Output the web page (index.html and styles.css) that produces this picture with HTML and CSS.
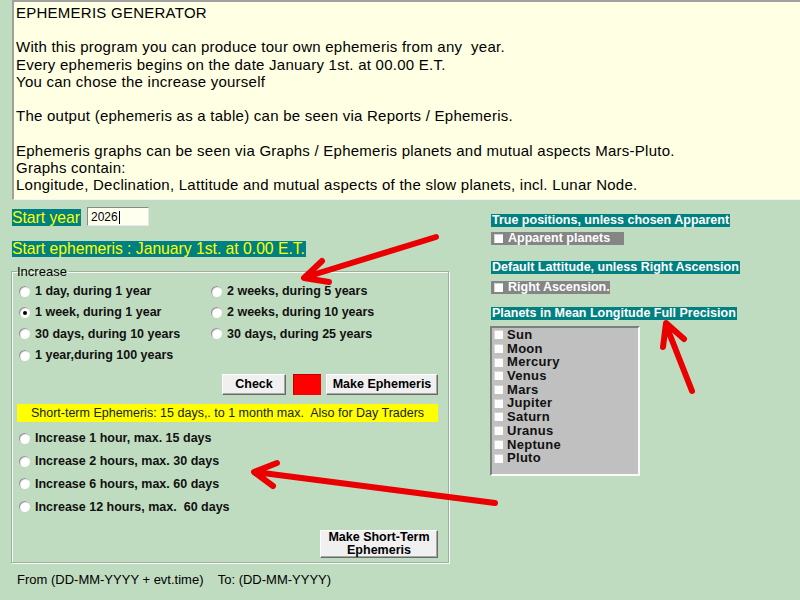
FILE: index.html
```html
<!DOCTYPE html>
<html lang="en">

<head>
  <meta charset="UTF-8">
  <meta name="viewport" content="width=device-width, initial-scale=1.0">
  <title>Ephemeris Generator</title>
  <link rel="stylesheet" href="styles.css">
</head>

<body>
  <div class="intro">
    <p>EPHEMERIS GENERATOR</p>
    <p>With this program you can produce tour own ephemeris from any&nbsp; year.<br>
      Every ephemeris begins on the date January 1st. at 00.00 E.T.<br>
      You can chose the increase yourself</p>
    <p>The output (ephemeris as a table) can be seen via Reports / Ephemeris.</p>
    <p>Ephemeris graphs can be seen via Graphs / Ephemeris planets and mutual aspects Mars-Pluto.<br>
      Graphs contain:<br>
      Longitude, Declination, Lattitude and mutual aspects of the slow planets, incl. Lunar Node.</p>
  </div>

  <div class="main">
    <div class="left">
      <div class="year-row">
        <span class="tag">Start year</span>
        <div class="field">2026<span class="caret"></span></div>
      </div>
      <div class="tag start">Start ephemeris : January 1st. at 0.00 E.T.</div>

      <fieldset class="increase">
        <legend>Increase</legend>
        <div class="options">
          <label class="opt"><span class="radio"></span>1 day, during 1 year</label>
          <label class="opt"><span class="radio"></span>2 weeks, during 5 years</label>
          <label class="opt"><span class="radio checked"></span>1 week, during 1 year</label>
          <label class="opt"><span class="radio"></span>2 weeks, during 10 years</label>
          <label class="opt"><span class="radio"></span>30 days, during 10 years</label>
          <label class="opt"><span class="radio"></span>30 days, during 25 years</label>
          <label class="opt"><span class="radio"></span>1 year,during 100 years</label>
        </div>

        <div class="actions">
          <button class="btn check">Check</button>
          <span class="swatch"></span>
          <button class="btn make">Make Ephemeris</button>
        </div>

        <div class="note">Short-term Ephemeris: 15 days,. to 1 month max.&nbsp; Also for Day Traders</div>

        <div class="short">
          <label class="opt"><span class="radio"></span>Increase 1 hour, max. 15 days</label>
          <label class="opt"><span class="radio"></span>Increase 2 hours, max. 30 days</label>
          <label class="opt"><span class="radio"></span>Increase 6 hours, max. 60 days</label>
          <label class="opt"><span class="radio"></span>Increase 12 hours, max.&nbsp; 60 days</label>
        </div>

        <div class="actions">
          <button class="btn tall">Make Short-Term<br>Ephemeris</button>
        </div>
      </fieldset>

      <p class="range">From (DD-MM-YYYY + evt.time)    To: (DD-MM-YYYY)</p>
    </div>

    <div class="right">
      <div class="head">True positions, unless chosen Apparent</div>
      <label class="toggle apparent"><span class="box"></span>Apparent planets</label>

      <div class="head gap">Default Lattitude, unless Right Ascension</div>
      <label class="toggle ascension"><span class="box"></span>Right Ascension.</label>

      <div class="head gap-small">Planets in Mean Longitude Full Precision</div>
      <ul class="planets">
        <li><span class="box"></span>Sun</li>
        <li><span class="box"></span>Moon</li>
        <li><span class="box"></span>Mercury</li>
        <li><span class="box"></span>Venus</li>
        <li><span class="box"></span>Mars</li>
        <li><span class="box"></span>Jupiter</li>
        <li><span class="box"></span>Saturn</li>
        <li><span class="box"></span>Uranus</li>
        <li><span class="box"></span>Neptune</li>
        <li><span class="box"></span>Pluto</li>
      </ul>
    </div>
  </div>

  <!-- hand-drawn pointers over the form -->
  <svg class="arrows" width="800" height="600" viewBox="0 0 800 600">
    <path d="M436 237 L306 277 M322 261 L304 278 L329 282" />
    <path d="M495 503 L255 472 M277 463 L254 472 L273 486" />
    <path d="M692 391 L666 325 M663 347 L666 323 L684 339" />
  </svg>
</body>

</html>
```

FILE: styles.css
```css
body {
  margin: 0;
  height: 600px;
  overflow: hidden;
  position: relative;
  background-color: #c0dcc0;
  font-family: "Liberation Sans", Arial, sans-serif;
  color: #000;
}

/* info panel at the top */
.intro {
  margin-left: 12px;
  height: 200px;
  box-sizing: border-box;
  padding: 2px 0 0 2px;
  background-color: #ffffe3;
  border-top: 2px solid #a0a0a0;
  border-left: 2px solid #a0a0a0;
  border-bottom: 1px solid #f4f4f4;
  font-size: 15px;
  line-height: 17.2px;
  letter-spacing: 0.25px;
}

.intro p {
  margin: 0 0 17.2px;
}

.main {
  display: flex;
  padding-left: 11px;
}

.left {
  width: 438px;
}

.tag {
  display: inline-block;
  background-color: #008080;
  color: #ffff00;
  font-size: 15.7px;
  line-height: 17px;
}

.year-row {
  display: flex;
  align-items: flex-start;
  margin: 7px 0 0 1px;
}

.year-row .tag {
  margin-top: 2px;
  padding-right: 1px;
}

.field {
  box-sizing: border-box;
  width: 62px;
  height: 19px;
  margin-left: 6px;
  padding: 3px 0 0 3px;
  background-color: #fffff0;
  border: 1px solid #e8e8e8;
  border-top-color: #8a8a8a;
  border-left-color: #8a8a8a;
  font-size: 12px;
  line-height: 13px;
}

.caret {
  display: inline-block;
  width: 1px;
  height: 13px;
  margin-left: 1px;
  vertical-align: top;
  background-color: #000;
}

.start {
  display: block;
  width: fit-content;
  margin: 14.5px 0 0 1px;
  line-height: 16px;
  padding-right: 1px;
}

/* group box */
.increase {
  box-sizing: border-box;
  width: 438px;
  margin: 7px 0 0;
  padding: 0 10px 4px 7px;
  border: 1px solid #a2ada2;
  box-shadow: inset 1px 1px 0 #f6fbf6, 1px 1px 0 #f6fbf6;
}

.increase legend {
  margin-left: -2px;
  padding: 0 2px 0 0;
  font-size: 13px;
  line-height: 15px;
}

.options {
  display: grid;
  grid-template-columns: 192px 1fr;
  grid-auto-rows: 21.33px;
  margin-top: 2px;
}

.opt {
  display: flex;
  align-items: center;
  gap: 5px;
  font-size: 12.5px;
  font-weight: bold;
  color: #111;
}

.radio {
  position: relative;
  flex: none;
  width: 11px;
  height: 11px;
  border-radius: 50%;
  background-color: #fff;
  box-shadow: inset 1px 1px 1px #8c8c8c;
}

.radio.checked::after {
  content: "";
  position: absolute;
  left: 4px;
  top: 4px;
  width: 4px;
  height: 4px;
  border-radius: 50%;
  background-color: #000;
}

.actions {
  display: flex;
  justify-content: flex-end;
  align-items: center;
  margin-top: 8px;
}

.btn {
  box-sizing: border-box;
  height: 21px;
  padding: 0;
  background-color: #f0f0f0;
  border: 1px solid;
  border-color: #fff #6a6a6a #6a6a6a #fff;
  box-shadow: inset -1px -1px 0 #a8a8a8;
  font-family: inherit;
  font-size: 12.5px;
  font-weight: bold;
  color: #000;
}

.check {
  width: 64px;
}

.swatch {
  width: 28px;
  height: 21px;
  margin: 0 5px 0 7px;
  background-color: #ff0000;
  box-shadow: inset 1px 1px 0 #c00000;
}

.make {
  width: 112px;
}

.note {
  height: 18px;
  margin: 9px 0 0 -2px;
  background-color: #ffff00;
  color: #222;
  font-size: 12.5px;
  line-height: 18px;
  text-align: center;
}

.short {
  display: grid;
  grid-auto-rows: 22.8px;
  margin-top: 5px;
}

.short + .actions {
  margin-top: 12px;
}

.tall {
  width: 118px;
  height: 28px;
  line-height: 13px;
}

.range {
  margin: 9px 0 0 6px;
  font-size: 13px;
  line-height: 16px;
  white-space: pre;
}

/* right hand options */
.right {
  display: flex;
  flex-direction: column;
  align-items: flex-start;
  margin: 14px 0 0 42px;
}

.head {
  padding: 0 1px;
  background-color: #008080;
  color: #fff;
  font-size: 12.5px;
  font-weight: bold;
  line-height: 13px;
}

.head.gap {
  margin-top: 16px;
}

.head.gap-small {
  margin-top: 13px;
}

.toggle {
  display: flex;
  align-items: center;
  gap: 5px;
  box-sizing: border-box;
  height: 13px;
  margin-top: 5px;
  padding-left: 3px;
  background-color: #858585;
  color: #fff;
  font-size: 12.5px;
  font-weight: bold;
  line-height: 13px;
}

.apparent {
  width: 133px;
}

.ascension {
  width: 119px;
  margin-top: 7px;
}

.box {
  flex: none;
  width: 9px;
  height: 9px;
  background-color: #fdfdfd;
  box-shadow: inset 1px 1px 0 #d6d6d6;
}

.planets {
  box-sizing: border-box;
  width: 150px;
  height: 150px;
  margin: 6px 0 0 -1px;
  padding: 0 0 0 2px;
  list-style: none;
  background-color: #c0c0c0;
  border: 2px solid;
  border-color: #7e7e7e #fafafa #fafafa #7e7e7e;
}

.planets li {
  display: flex;
  align-items: center;
  gap: 4px;
  height: 13.7px;
  font-size: 13px;
  font-weight: bold;
  line-height: 13.7px;
  letter-spacing: 0.3px;
  color: #111;
}

.arrows {
  position: absolute;
  left: 0;
  top: 0;
  pointer-events: none;
  fill: none;
  stroke: #ea0000;
  stroke-width: 6;
  stroke-linecap: round;
  stroke-linejoin: round;
}
```
